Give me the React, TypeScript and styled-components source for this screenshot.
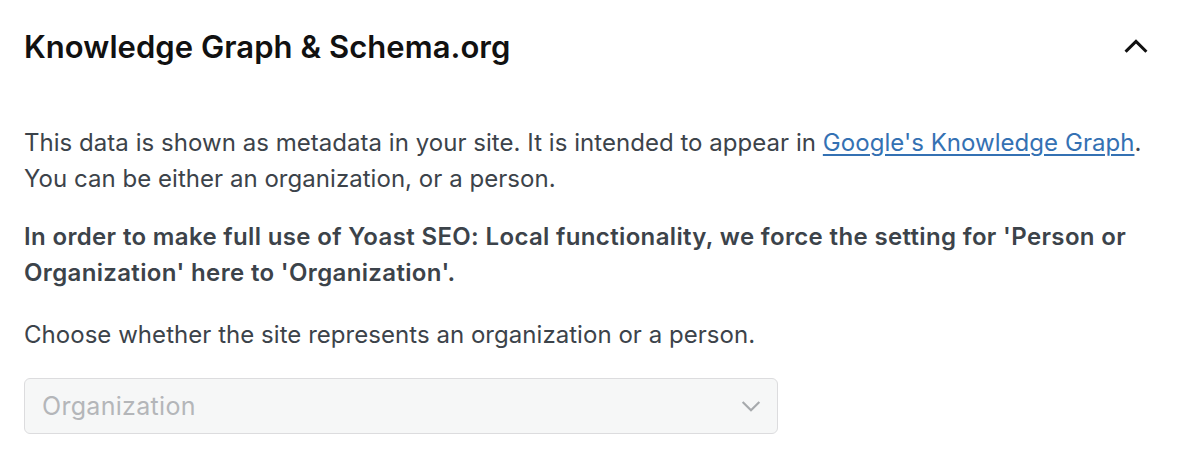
import React from "react";
import styled, { createGlobalStyle } from "styled-components";

const Global = createGlobalStyle`
  html, body { margin: 0; padding: 0; background: #ffffff; }
  body { font-family: Inter, "Noto Sans", "Liberation Sans", sans-serif; }
`;

const Panel = styled.section`
  width: 1180px;
  box-sizing: border-box;
  padding: 0 30px 0 24px;
`;

const Header = styled.header`
  display: flex;
  align-items: center;
  justify-content: space-between;
  height: 92px;
`;

const Title = styled.h2`
  margin: 0;
  font-size: 31px;
  font-weight: 600;
  color: #111111;
  letter-spacing: 0.05px;
`;

const ToggleButton = styled.button`
  border: 0;
  background: none;
  padding: 0;
  width: 28px;
  height: 28px;
  display: flex;
  align-items: center;
  justify-content: center;
  cursor: pointer;
`;

const Body = styled.div`
  padding-top: 33px;
  margin-right: -20px;
`;

const Paragraph = styled.p<{ $bold?: boolean; $gap?: number }>`
  margin: ${(p) => p.$gap ?? 0}px 0 0;
  font-size: 24px;
  line-height: 36px;
  font-weight: ${(p) => (p.$bold ? 600 : 400)};
  letter-spacing: ${(p) => (p.$bold ? "0.35px" : "0.04px")};
  color: #3c434a;
`;

const Link = styled.a`
  color: #3471b3;
  text-decoration: underline;
  text-underline-offset: 3px;
  text-decoration-thickness: 1.5px;
`;

const SelectBox = styled.div`
  margin-top: 25px;
  width: 754px;
  height: 56px;
  box-sizing: border-box;
  border: 1px solid #dcdcde;
  border-radius: 6px;
  background: #f6f7f7;
  display: flex;
  align-items: center;
  justify-content: space-between;
  padding: 0 13px 0 17px;
  font-size: 25px;
  letter-spacing: 0.3px;
  color: #b4b6b9;
`;

const Chevron = ({ up, color, size, stroke }: { up?: boolean; color: string; size: number; stroke: number }) => (
  <svg width={size} height={size} viewBox="0 0 24 24" fill="none">
    <path
      d={up ? "M4 16 L12 8 L20 16" : "M5 9 L12 16 L19 9"}
      stroke={color}
      strokeWidth={stroke}
      strokeLinecap="square"
      strokeLinejoin="miter"
    />
  </svg>
);

export default function App() {
  return (
    <>
      <Global />
      <Panel>
        <Header>
          <Title>Knowledge Graph &amp; Schema.org</Title>
          <ToggleButton aria-label="Collapse">
            <Chevron up color="#111111" size={28} stroke={2.6} />
          </ToggleButton>
        </Header>
        <Body>
          <Paragraph>
            This data is shown as metadata in your site. It is intended to appear in{" "}
            <Link href="#">Google's Knowledge Graph</Link>.<br />
            You can be either an organization, or a person.
          </Paragraph>
          <Paragraph $bold $gap={22}>
            In order to make full use of Yoast SEO: Local functionality, we force the setting for 'Person or
            Organization' here to 'Organization'.
          </Paragraph>
          <Paragraph $gap={26}>Choose whether the site represents an organization or a person.</Paragraph>
          <SelectBox>
            <span>Organization</span>
            <Chevron color="#a7aaad" size={26} stroke={2} />
          </SelectBox>
        </Body>
      </Panel>
    </>
  );
}
